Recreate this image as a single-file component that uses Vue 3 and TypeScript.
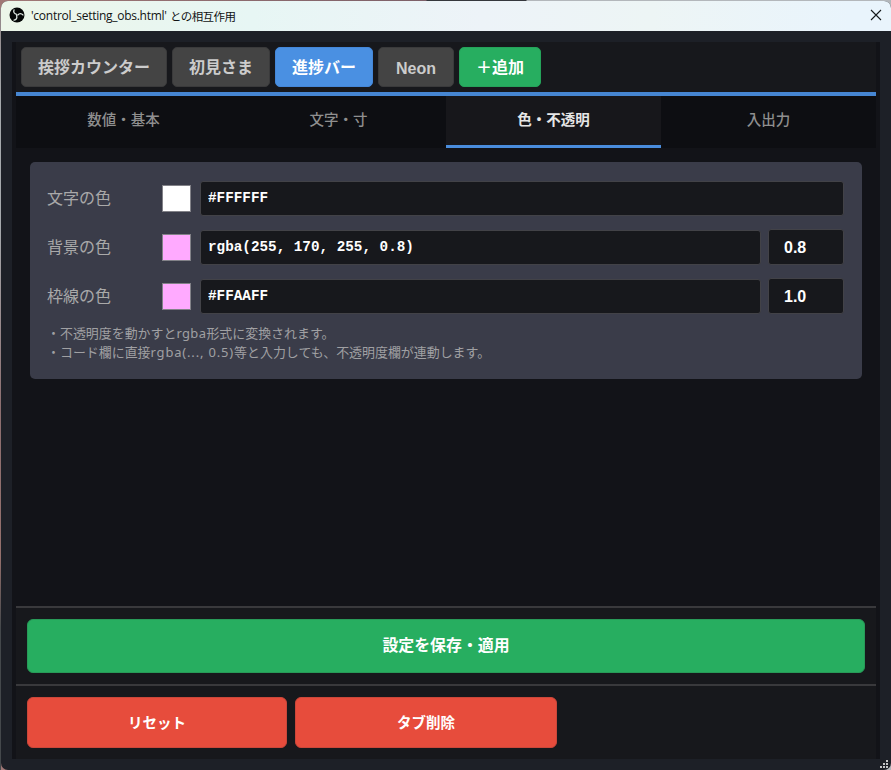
<script setup lang="ts">
import { ref } from 'vue'

interface ColorRow {
  label: string
  swatch: string
  code: string
  opacity?: string
}

const tabs = ['挨拶カウンター', '初見さま', '進捗バー', 'Neon']
const activeTab = ref(2)

const sections = ['数値・基本', '文字・寸', '色・不透明', '入出力']
const activeSection = ref(2)

const rows = ref<ColorRow[]>([
  { label: '文字の色', swatch: '#ffffff', code: '#FFFFFF' },
  { label: '背景の色', swatch: '#ffaaff', code: 'rgba(255, 170, 255, 0.8)', opacity: '0.8' },
  { label: '枠線の色', swatch: '#ffaaff', code: '#FFAAFF', opacity: '1.0' },
])
</script>

<template>
  <div class="desktop">
    <div class="window">
      <header class="titlebar">
        <svg class="logo" viewBox="0 0 16 16">
          <circle cx="8" cy="8" r="7.5" fill="#050707" />
          <g fill="none" stroke="#dfe8e3" stroke-width="1.3" stroke-linecap="round">
            <path d="M5 2.9C4.2 5 5.2 7 7.7 7.3" />
            <path d="M5 2.9C4.2 5 5.2 7 7.7 7.3" transform="rotate(120 8 8)" />
            <path d="M5 2.9C4.2 5 5.2 7 7.7 7.3" transform="rotate(240 8 8)" />
          </g>
        </svg>
        <span class="title"><span class="file">'control_setting_obs.html'</span><span class="title-jp">との相互作用</span></span>
        <svg class="close" viewBox="0 0 12 12">
          <path d="M1 1L11 11M11 1L1 11" fill="none" stroke="#15191b" stroke-width="1.1" />
        </svg>
      </header>

      <main class="page">
        <nav class="tabs">
          <button
            v-for="(tab, i) in tabs"
            :key="tab"
            class="tab"
            :class="{ active: i === activeTab, latin: tab === 'Neon' }"
            @click="activeTab = i"
          >{{ tab }}</button>
          <button class="tab add">＋追加</button>
        </nav>

        <nav class="sections">
          <button
            v-for="(section, i) in sections"
            :key="section"
            class="section"
            :class="{ active: i === activeSection }"
            @click="activeSection = i"
          >{{ section }}</button>
        </nav>

        <div class="content">
          <div class="panel">
            <div v-for="row in rows" :key="row.label" class="row">
              <span class="label">{{ row.label }}</span>
              <span class="swatch" :style="{ background: row.swatch }"></span>
              <input v-model="row.code" class="code" type="text" spellcheck="false" />
              <input v-if="row.opacity" v-model="row.opacity" class="opacity" type="text" />
            </div>
            <p class="hint">・不透明度を動かすと<span class="word">rgba</span>形式に変換されます。<br />・コード欄に直接<span class="expr">rgba(..., 0.5)</span>等と入力しても、不透明度欄が連動します。</p>
          </div>
        </div>

        <div class="save-bar">
          <button class="save">設定を保存・適用</button>
        </div>
        <div class="danger-bar">
          <button class="danger">リセット</button>
          <button class="danger">タブ削除</button>
        </div>
      </main>

      <svg class="grip" viewBox="0 0 9 9" fill="#c4c5c7">
        <path d="M6 0h2v2h-2zM3 3h2v2h-2zM6 3h2v2h-2zM0 6h2v2h-2zM3 6h2v2h-2zM6 6h2v2h-2z" />
      </svg>
    </div>
  </div>
</template>

<style>
body {
  margin: 0;
  overflow: hidden;
}
</style>

<style scoped>
* {
  box-sizing: border-box;
}
.desktop {
  width: 891px;
  height: 770px;
  padding: 1px 0 0 1px;
  background:
    linear-gradient(180deg, #8f8284 0, #a5a9ac 90px, #a5a9ac 220px, #8c6f70 400px, #94706c 550px, #44484b 620px, #44484b 770px) 0 8px / 1px 100% no-repeat,
    linear-gradient(90deg, #a07876 0, #7d6068 426px, #35373c 427px, #35373c 526px, #b3b7bb 527px);
  font-family: 'Liberation Sans', 'Noto Sans CJK JP', sans-serif;
}
.window {
  position: relative;
  height: 769px;
  display: flex;
  flex-direction: column;
  overflow: hidden;
  border-radius: 7px;
  background: #1d2027;
}
.titlebar {
  display: flex;
  align-items: center;
  height: 30px;
  flex: none;
  padding: 0 9px 0 8px;
  background: linear-gradient(90deg, #ecf6e9 0, #e7f6f4 250px, #edf3f8 480px, #edf5f5 650px, #e9f4fc 850px);
  color: #101313;
}
.logo {
  width: 16px;
  height: 16px;
  margin-top: -2px;
}
.title {
  display: flex;
  align-items: center;
  flex: 1;
  margin-left: 6px;
  font-size: 12px;
  line-height: 20px;
  white-space: nowrap;
}
.file {
  width: 139px;
  font-family: 'Open Sans', sans-serif;
  letter-spacing: -0.27px;
}
.title-jp {
  margin-top: -1px;
  font-family: 'Noto Sans CJK JP', sans-serif;
  font-size: 11.5px;
  letter-spacing: -0.6px;
}
.close {
  width: 12px;
  height: 12px;
  margin-top: -2px;
}
.page {
  display: flex;
  flex-direction: column;
  width: 868px;
  height: 717px;
  margin: 11px 0 0 11px;
  padding: 0 4px;
  background: #121318;
}
button {
  margin: 0;
  padding: 0;
  border: 0;
  font-family: 'Liberation Sans', 'Noto Sans CJK JP', sans-serif;
  font-weight: bold;
  white-space: nowrap;
}
.tabs {
  display: flex;
  gap: 5px;
  flex: none;
  height: 54px;
  padding: 5px 5px 0;
  border-bottom: 4px solid #4686d2;
  background: #17181c;
}
.tab {
  height: 40px;
  padding: 0 16px;
  border: 1px solid #3a3a3b;
  border-radius: 5px;
  background: #444;
  color: #ccc;
  font-size: 16px;
  line-height: 37px;
}
.tab.latin {
  width: 76px;
  padding: 2px 0 0;
}
.tab.active {
  border-color: #4487d9;
  background: #4a90e2;
  color: #fff;
}
.tab.add {
  border-color: #25a35a;
  background: #27ae60;
  color: #fff;
}
.sections {
  display: flex;
  flex: none;
  height: 52px;
  background: #0d0e12;
}
.section {
  flex: 1;
  padding-bottom: 5px;
  border-bottom: 3px solid transparent;
  background: transparent;
  color: #8f8f8f;
  font-size: 14.5px;
  font-weight: 500;
}
.section.active {
  border-bottom-color: #4a8ddd;
  background: #17171b;
  color: #e6e6e6;
  font-weight: bold;
}
.content {
  flex: 1;
  padding: 14px 14px 0;
}
.panel {
  height: 217px;
  padding: 18px 18px 0 17px;
  border-radius: 5px;
  background: #3a3c49;
}
.row {
  display: flex;
  align-items: center;
  height: 37px;
  margin-bottom: 12px;
}
.label {
  width: 115px;
  padding-bottom: 3px;
  color: #a9a9a9;
  font-size: 16px;
}
.swatch {
  width: 29px;
  height: 27px;
  margin: -1px 9px 0 0;
  border: 1px solid #828288;
}
.code,
.opacity {
  min-width: 0;
  border: 1px solid #424247;
  border-radius: 3px;
  outline: 0;
  background: #17181c;
  color: #fff;
  font-weight: bold;
}
.code {
  flex: 1;
  height: 35px;
  padding: 0 7px 1px;
  font-family: 'Liberation Mono', monospace;
  font-size: 14.3px;
}
.opacity {
  width: 76px;
  height: 36px;
  margin: -1px 0 0 7px;
  padding: 2px 15px 0;
  font-family: 'Liberation Sans', sans-serif;
  font-size: 16px;
}
.hint {
  margin: -3px 0 0;
  color: #a0a0a3;
  font-family: 'Noto Sans', 'Noto Sans CJK JP', sans-serif;
  font-size: 12.95px;
  line-height: 19px;
  white-space: nowrap;
}
.word {
  letter-spacing: 0.4px;
}
.expr {
  letter-spacing: 0.85px;
}
.save-bar {
  flex: none;
  height: 78px;
  padding: 11px 11px 0;
  border-top: 2px solid #39393c;
  background: #17181c;
}
.save {
  display: block;
  width: 100%;
  height: 54px;
  padding-bottom: 3px;
  border: 1px solid #289a58;
  border-radius: 6px;
  background: #27ae60;
  color: #fff;
  font-size: 15.9px;
}
.danger-bar {
  display: flex;
  gap: 8px;
  flex: none;
  height: 75px;
  padding: 11px;
  border-top: 2px solid #39393c;
  background: #17181c;
}
.danger {
  width: 260px;
  height: 51px;
  padding-bottom: 2px;
  border: 1px solid #cb473a;
  border-radius: 6px;
  background: #e74c3c;
  color: #fff;
  font-size: 14.5px;
}
.danger:last-child {
  width: 262px;
}
.grip {
  position: absolute;
  right: 2px;
  bottom: 1px;
  width: 9px;
  height: 9px;
}
</style>
